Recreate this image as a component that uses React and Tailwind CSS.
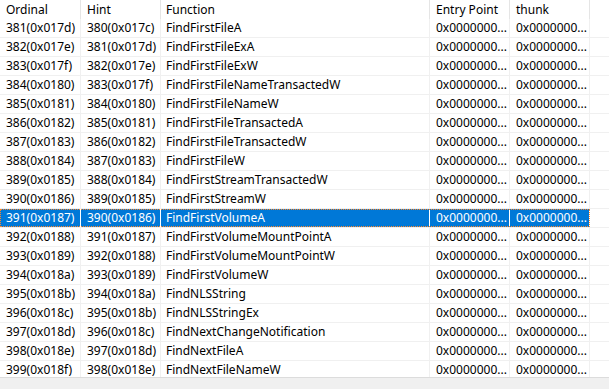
import React from "react";

const names = [
  "FindFirstFileA",
  "FindFirstFileExA",
  "FindFirstFileExW",
  "FindFirstFileNameTransactedW",
  "FindFirstFileNameW",
  "FindFirstFileTransactedA",
  "FindFirstFileTransactedW",
  "FindFirstFileW",
  "FindFirstStreamTransactedW",
  "FindFirstStreamW",
  "FindFirstVolumeA",
  "FindFirstVolumeMountPointA",
  "FindFirstVolumeMountPointW",
  "FindFirstVolumeW",
  "FindNLSString",
  "FindNLSStringEx",
  "FindNextChangeNotification",
  "FindNextFileA",
  "FindNextFileNameW",
];

const hx = (n) => `${n}(0x${n.toString(16).padStart(4, "0")})`;

const rows = names.map((name, i) => ({
  ord: hx(381 + i),
  hint: hx(380 + i),
  name,
  sel: i === 10,
}));

function Cell({ w, children, sel, pl = "pl-[6px]" }) {
  return (
    <div
      className={`${w} ${pl} h-full shrink-0 whitespace-nowrap overflow-hidden border-r ${
        sel ? "border-white" : "border-[#f0f0f0]"
      }`}
    >
      {children}
    </div>
  );
}

export default function App() {
  return (
    <div
      className="w-[609px] h-[389px] bg-white overflow-hidden flex flex-col text-[12px] text-black"
      style={{ fontFamily: '"Segoe UI", "Noto Sans", sans-serif' }}
    >
      <div className="h-[377px] overflow-hidden flex flex-col">
        <div className="h-[19px] shrink-0 flex leading-[19px]">
          <div className="w-[81px] pl-[6px] border-r border-[#e5e5e5] shrink-0">Ordinal</div>
          <div className="w-[80px] pl-[6px] border-r border-[#e5e5e5] shrink-0">Hint</div>
          <div className="w-[269px] pl-[5px] border-r border-[#e5e5e5] shrink-0">Function</div>
          <div className="w-[80px] pl-[6px] border-r border-[#e5e5e5] shrink-0">Entry Point</div>
          <div className="w-[80px] pl-[6px] border-r border-[#e5e5e5] shrink-0">thunk</div>
        </div>
        {rows.map((r) => (
          <div
            key={r.ord}
            className="h-[19px] shrink-0 flex border-b border-[#f0f0f0] leading-[18px]"
          >
            <div
              className={`flex h-full ${
                r.sel
                  ? "bg-[#0078d7] text-white outline-1 outline-dotted outline-[#ff8728] -outline-offset-1"
                  : ""
              }`}
            >
              <Cell w="w-[81px]" sel={r.sel}>{r.ord}</Cell>
              <Cell w="w-[80px]" sel={r.sel}>{r.hint}</Cell>
              <Cell w="w-[269px]" sel={r.sel} pl="pl-[5px]">{r.name}</Cell>
              <Cell w="w-[80px]" sel={r.sel}>0x0000000...</Cell>
              <Cell w="w-[80px]" sel={r.sel}>0x0000000...</Cell>
            </div>
          </div>
        ))}
      </div>
      <div className="flex-1 bg-[#f0f0f0] border-t border-[#dcdcdc]" />
    </div>
  );
}
